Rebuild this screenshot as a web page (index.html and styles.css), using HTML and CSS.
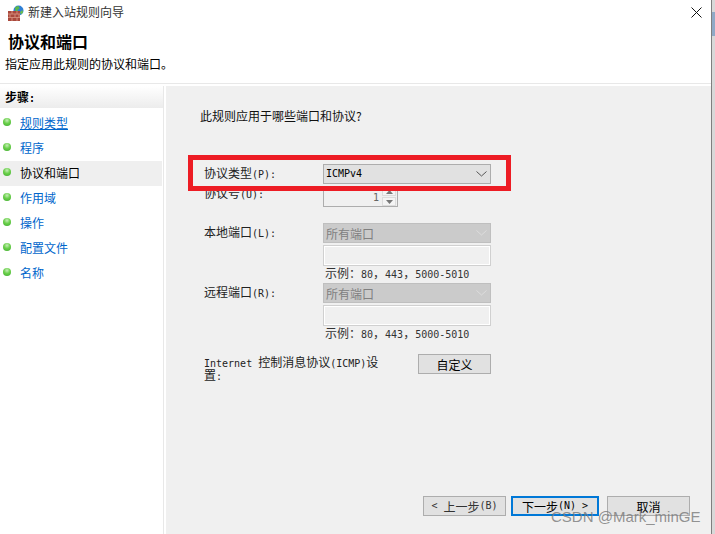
FILE: index.html
```html
<!DOCTYPE html>
<html lang="zh-CN">
<head>
<meta charset="utf-8">
<title>新建入站规则向导</title>
<link rel="stylesheet" href="styles.css">
</head>
<body>
<div class="screen">
  <div class="window">
    <header class="head">
      <div class="titlebar">
        <svg class="app-icon" width="16" height="16" viewBox="0 0 16 16">
          <circle cx="10.500" cy="5.500" r="5" fill="#2f7fd6"/>
          <path d="M7 2.500c1.500-1.500 3-1.500 4-1l.5 2-2 1.500 1 2.500-3 .5z" fill="#5cb84a"/>
          <path d="M12 7l2.500-2 .5 2.500-2 2z" fill="#6cc04a"/>
          <rect x="0" y="6" width="12" height="10" fill="#a9483c"/>
          <path d="M0 9h12M0 12.500h12M4 6v3M9 6v3M2 9v3.500M7 9v3.500M11 9v3.500M4 12.500v3.500M9 12.500v3.500" stroke="#d28a78" stroke-width="1" fill="none"/>
        </svg>
        <span class="title-text">新建入站规则向导</span>
        <svg class="close" width="11" height="11" viewBox="0 0 11 11"><path d="M.5.500l10 10M10.500.500l-10 10" stroke="#111" stroke-width="1" fill="none"/></svg>
      </div>
      <h1 class="heading">协议和端口</h1>
      <p class="subtitle">指定应用此规则的协议和端口。</p>
    </header>
    <div class="body">
      <aside class="side">
        <div class="steps-head">步骤<span class="lat">:</span></div>
        <ul class="steps">
          <li class="step"><i class="dot"></i><a class="link under">规则类型</a></li>
          <li class="step"><i class="dot"></i><a class="link">程序</a></li>
          <li class="step current"><i class="dot"></i><span>协议和端口</span></li>
          <li class="step"><i class="dot"></i><a class="link">作用域</a></li>
          <li class="step"><i class="dot"></i><a class="link">操作</a></li>
          <li class="step"><i class="dot"></i><a class="link">配置文件</a></li>
          <li class="step"><i class="dot"></i><a class="link">名称</a></li>
        </ul>
      </aside>
      <main class="main">
        <p class="question">此规则应用于哪些端口和协议?</p>
        <div class="row first">
          <label class="label">协议类型<span class="lat">(P):</span></label>
          <div class="combo"><span class="lat">ICMPv4</span><svg class="chev" width="11" height="6" viewBox="0 0 11 6"><path d="M.5.500l5 4.500 5-4.500" stroke="#555" fill="none"/></svg></div>
        </div>
        <div class="row second">
          <label class="label up">协议号<span class="lat">(U):</span></label>
          <div class="spinner">
            <span class="spin-val"><span class="lat">1</span></span>
            <span class="spin-btns">
              <span class="spin-btn"><svg width="7" height="4" viewBox="0 0 7 4"><path d="M3.500 0l3.500 4h-7z" fill="#777"/></svg></span>
              <span class="spin-btn"><svg width="7" height="4" viewBox="0 0 7 4"><path d="M0 0h7l-3.500 4z" fill="#777"/></svg></span>
            </span>
          </div>
        </div>
        <div class="row group">
          <label class="label">本地端口<span class="lat">(L):</span></label>
          <div class="fields">
            <div class="combo off">所有端口<svg class="chev" width="11" height="6" viewBox="0 0 11 6"><path d="M.5.500l5 4.500 5-4.500" stroke="#dcdcdc" fill="none"/></svg></div>
            <div class="textbox"></div>
            <div class="example">示例：<span class="lat">80</span>，<span class="lat">443</span>，<span class="lat">5000-5010</span></div>
          </div>
        </div>
        <div class="row group remote">
          <label class="label">远程端口<span class="lat">(R):</span></label>
          <div class="fields">
            <div class="combo off">所有端口<svg class="chev" width="11" height="6" viewBox="0 0 11 6"><path d="M.5.500l5 4.500 5-4.500" stroke="#dcdcdc" fill="none"/></svg></div>
            <div class="textbox"></div>
            <div class="example">示例：<span class="lat">80</span>，<span class="lat">443</span>，<span class="lat">5000-5010</span></div>
          </div>
        </div>
        <div class="icmp">
          <p class="icmp-text"><span class="lat">Internet </span>控制消息协议<span class="lat">(ICMP)</span>设置<span class="lat">:</span></p>
          <button class="btn custom">自定义</button>
        </div>
        <footer class="actions">
          <button class="btn back"><span class="lat">&lt; </span>上一步<span class="lat">(B)</span></button>
          <button class="btn next">下一步<span class="lat">(N) &gt;</span></button>
          <button class="btn cancel">取消</button>
        </footer>
      </main>
    </div>
  </div>
  <div class="strip"><div class="strip-blue"></div></div>
  <div class="redbox"></div>
  <div class="watermark">CSDN @Mark_minGE</div>
</div>
</body>
</html>
```
FILE: styles.css
```css
* { box-sizing: border-box; }
html, body { margin: 0; padding: 0; }
body {
  font-family: "Noto Sans CJK SC", "Liberation Sans", sans-serif;
  font-size: 12px;
  color: #111;
  background: #fff;
}
.screen { position: relative; display: flex; width: 715px; height: 534px; overflow: hidden; }
.window {
  display: flex;
  flex-direction: column;
  width: 712px;
  height: 534px;
  background: #fff;
  border-right: 1px solid #7f7f7f;
}
.strip { width: 3px; height: 534px; background: #d8d8d8; padding-top: 12px; }
.strip-blue { height: 24px; background: #8fa9c6; }
.lat { font-family: "DejaVu Sans Mono", monospace; font-size: 10px; line-height: 0; }

.head { position: relative; height: 86px; flex: none; }
.head::after { content: ""; position: absolute; left: 0; right: 0; top: 83px; height: 1px; background: #e8e8e8; }
.titlebar { position: relative; display: flex; align-items: center; height: 24px; padding-left: 8px; gap: 4px; }
.app-icon { flex: none; margin-top: 1px; }
.title-text { color: #333; line-height: 16px; }
.close { position: absolute; left: 691px; top: 7px; }
.heading { margin: 7px 0 0 8px; font-size: 16px; line-height: 20px; font-weight: 700; color: #000; }
.subtitle { margin: 5px 0 0 5px; line-height: 16px; color: #000; }

.body { display: flex; flex: 1; min-height: 0; }
.side { width: 166px; flex: none; background: linear-gradient(to right, #fff 163px, #e8e8e8 163px, #e8e8e8 164px, #fff 164px); }
.steps-head {
  height: 22px;
  margin-right: 3px;
  padding: 2px 0 0 5px;
  line-height: 18px;
  font-weight: 700;
  color: #000;
  background: linear-gradient(#fff, #ececec);
}
.steps { list-style: none; margin: 3px 0 0; padding: 0; }
.step { display: flex; align-items: center; gap: 9px; height: 25px; width: 162px; padding: 0 0 2px 3px; }
.step.current { background: #efefef; color: #000; }
.dot {
  width: 8px;
  height: 8px;
  margin-bottom: 1px;
  border-radius: 50%;
  background: radial-gradient(circle at 50% 30%, #c6ecb8 0, #6ad04a 45%, #3eaa2e 100%);
}
.link { color: #0066cc; }
.under { text-decoration: underline; }

.main { display: flex; flex-direction: column; flex: 1; min-width: 0; padding: 22px 21px 18px 34px; background: #f0f0f0; }
.question { margin: 0; line-height: 16px; color: #111; }
.row { display: flex; padding-left: 4px; }
.first { margin-top: 40px; }
.second { margin-top: 2px; height: 21px; }
.group { margin-top: 16px; }
.remote { margin-top: 3px; }
.label { width: 119px; flex: none; line-height: 18px; color: #222; }
.label.up { margin-top: -2px; }
.fields { display: flex; flex-direction: column; width: 168px; }
.combo {
  display: flex;
  align-items: center;
  justify-content: space-between;
  width: 168px;
  height: 20px;
  padding: 0 3px 0 2px;
  border: 1px solid #adadad;
  background: #e1e1e1;
  color: #000;
}
.chev { flex: none; }
.combo.off { background: #cbcbcb; border-color: #bfbfbf; color: #808080; }
.textbox { width: 168px; height: 21px; margin-top: 2px; background: #f0f0f0; border: 1px solid #d0d0d0; box-shadow: inset 0 0 0 1px #fff; }
.example { height: 14px; padding-left: 2px; line-height: 14px; color: #333; }

.spinner { display: flex; width: 75px; height: 21px; border: 1px solid #adadad; background: #f0f0f0; padding-right: 1px; }
.spin-val { flex: 1; padding-right: 3px; text-align: right; line-height: 18px; color: #666; }
.spin-btns { display: flex; flex-direction: column; gap: 1px; width: 14px; }
.spin-btn { display: flex; align-items: center; justify-content: center; flex: 1; border: 1px solid #dcdcdc; background: #f4f4f4; }

.icmp { display: flex; justify-content: space-between; align-items: flex-start; width: 287px; margin: 14px 0 0 4px; }
.icmp-text { width: 175px; margin: 1px 0 0; line-height: 13px; color: #222; }
.btn {
  display: flex;
  align-items: center;
  justify-content: center;
  height: 20px;
  padding: 0;
  border: 1px solid #adadad;
  background: #e1e1e1;
  color: #000;
  font: inherit;
  white-space: pre;
}
.custom { width: 73px; flex: none; }
.actions { display: flex; margin-top: auto; margin-left: 223px; }
.back { width: 83px; color: #333; }
.next { width: 88px; margin-left: 5px; border: 2px solid #0078d7; }
.cancel { width: 83px; margin-left: 8px; }

.redbox { position: absolute; left: 188px; top: 155px; width: 323px; height: 36px; border: 5px solid #ed1c24; }
.watermark {
  position: absolute;
  left: 551px;
  top: 508px;
  font-family: "Liberation Sans", sans-serif;
  font-size: 15px;
  line-height: 18px;
  white-space: nowrap;
  color: rgba(120, 120, 120, 0.8);
}
```
